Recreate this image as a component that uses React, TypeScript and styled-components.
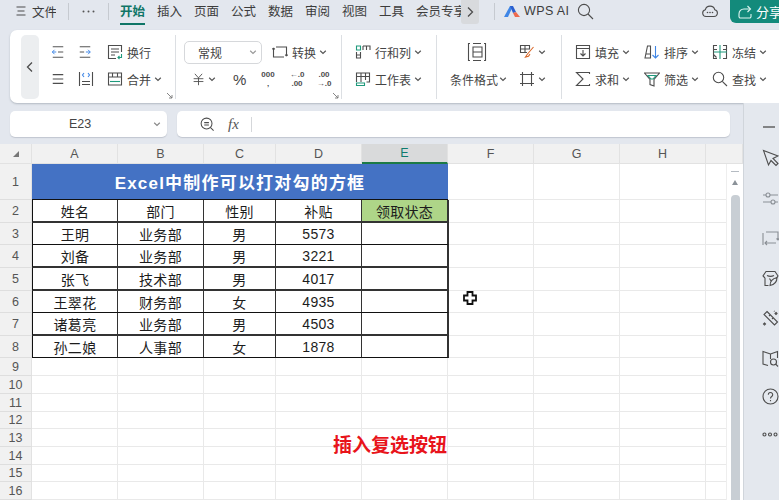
import React from "react";
import styled, { createGlobalStyle } from "styled-components";

const GlobalStyle = createGlobalStyle`
  html, body {
    margin: 0;
    padding: 0;
    background: #e3e7ee;
  }
  * {
    box-sizing: border-box;
  }
`;

const CJK = `"Liberation Sans", "Noto Sans CJK SC", sans-serif`;

const Page = styled.div`
  width: 779px;
  height: 500px;
  overflow: hidden;
  position: relative;
  background: #e3e7ee;
  font-family: ${CJK};
  color: #444;
`;

/* ---------- top bar ---------- */
const TopBar = styled.div`
  height: 28px;
  display: flex;
  align-items: flex-start;
  font-size: 12.5px;
  color: #3c3c3c;
  white-space: nowrap;
`;

const TopItem = styled.div<{ $w: number }>`
  width: ${(p) => p.$w}px;
  height: 22px;
  flex: none;
  display: flex;
  align-items: center;
  overflow: hidden;
`;

const Tab = styled.div<{ $active?: boolean }>`
  width: 37px;
  height: 25px;
  flex: none;
  line-height: 25px;
  position: relative;
  font-weight: ${(p) => (p.$active ? 700 : 400)};
  color: ${(p) => (p.$active ? "#0f7566" : "#3c3c3c")};
  &::after {
    content: "";
    display: ${(p) => (p.$active ? "block" : "none")};
    position: absolute;
    left: 0;
    bottom: 0;
    width: 25px;
    height: 2px;
    background: #0f7566;
  }
`;

const TabsWrap = styled.div`
  margin-left: 11px;
  display: flex;
`;

const Clipped = styled.div`
  width: 45px;
  height: 25px;
  line-height: 25px;
  overflow: hidden;
  flex: none;
`;

const MoreTabs = styled.div`
  width: 18px;
  height: 24px;
  flex: none;
  display: flex;
  align-items: center;
  justify-content: center;
  background: #d8dadd;
  border-radius: 0 0 3px 3px;
`;

const VLine = styled.div<{ $ml: number; $mr: number }>`
  width: 1px;
  height: 17px;
  margin: 3px ${(p) => p.$mr}px 0 ${(p) => p.$ml}px;
  background: #c6cad0;
  flex: none;
`;

const ShareButton = styled.div`
  margin-left: 12px;
  width: 60px;
  height: 23px;
  flex: none;
  display: flex;
  align-items: center;
  gap: 3px;
  padding-left: 7px;
  background: #138a7b;
  color: #fff;
  font-size: 13px;
  border-bottom-left-radius: 6px;
`;

/* ---------- ribbon ---------- */
const Ribbon = styled.div`
  margin: 2px 0 0 10px;
  height: 73px;
  background: #fff;
  border-radius: 7px 0 0 7px;
  display: flex;
  align-items: center;
  padding-left: 11px;
  box-shadow: 0 1px 2px rgba(90, 100, 115, 0.35);
  font-size: 12px;
  white-space: nowrap;
`;

const Collapse = styled.div`
  width: 18px;
  height: 64px;
  flex: none;
  background: #eceef0;
  border-radius: 5px;
  display: flex;
  align-items: center;
  justify-content: center;
`;

const Group = styled.div<{ $w: number; $pl: number; $last?: boolean }>`
  width: ${(p) => p.$w}px;
  height: 64px;
  flex: none;
  padding: 0 0 2px ${(p) => p.$pl}px;
  position: relative;
  display: flex;
  flex-direction: column;
  justify-content: center;
  border-right: ${(p) => (p.$last ? "none" : "1px solid #dcdfe3")};
`;

const ToolRow = styled.div<{ $pl?: number }>`
  height: 27px;
  display: flex;
  align-items: center;
  padding-left: ${(p) => p.$pl ?? 0}px;
`;

const Tool = styled.div<{ $w?: number; $pl?: number }>`
  width: ${(p) => (p.$w ? `${p.$w}px` : "auto")};
  padding-left: ${(p) => p.$pl ?? 0}px;
  flex: none;
  display: flex;
  align-items: center;
  gap: 4px;
`;

const ToolCaret = styled.span`
  display: inline-flex;
  margin-left: -1px;
`;

const Launcher = styled.div`
  position: absolute;
  right: 2px;
  bottom: 0;
  display: flex;
`;

const FormatSelect = styled.div`
  width: 78px;
  height: 23px;
  flex: none;
  margin-right: 10px;
  padding: 0 4px 0 13px;
  border: 1px solid #d6d8db;
  border-radius: 5px;
  display: flex;
  align-items: center;
  justify-content: space-between;
`;

const Percent = styled.span`
  font-size: 15px;
`;

const NumGlyph = styled.div`
  width: 18px;
  display: flex;
  flex-direction: column;
  align-items: center;
  font-size: 8px;
  font-weight: 700;
  color: #4d4d4d;
  span {
    height: 9px;
    line-height: 9px;
  }
`;

/* ---------- work area ---------- */
const Body = styled.div`
  display: flex;
  height: 397px;
`;

const Left = styled.div`
  width: 743px;
  flex: none;
`;

const FormulaRow = styled.div`
  height: 41px;
  padding: 8px 0 7px 10px;
  display: flex;
  gap: 10px;
`;

const NameBox = styled.div`
  width: 157px;
  background: #fff;
  border-radius: 5px;
  display: flex;
  align-items: center;
  justify-content: space-between;
  padding: 0 6px 0 59px;
  font-size: 12.5px;
  color: #444;
  box-shadow: 0 1px 1px rgba(90, 100, 115, 0.25);
`;

const FormulaBar = styled.div`
  width: 553px;
  background: #fff;
  border-radius: 5px;
  display: flex;
  align-items: center;
  padding-left: 23px;
  box-shadow: 0 1px 1px rgba(90, 100, 115, 0.25);
`;

const Fx = styled.span`
  margin-left: 13px;
  font: italic 15px "Liberation Serif", serif;
  color: #555;
`;

const FormulaLine = styled.div`
  width: 1px;
  height: 15px;
  margin-left: 12px;
  background: #d5d7da;
`;

const SheetWrap = styled.div`
  position: relative;
  height: 356px;
  overflow: hidden;
`;

const Sheet = styled.div`
  display: grid;
  grid-template-columns: 32px 86px 86px 72px 86px 86px 86px 86px 86px 37px;
  grid-template-rows: 20px 36px 23px 22px 23px 23px 22px 23px 22px 18px 18px 18px 17px 18px 18px 17px 18px;
  background: #fff;
`;

const ColHead = styled.div<{ $selected?: boolean }>`
  background: ${(p) => (p.$selected ? "#d9dadb" : "#f1f1f1")};
  border-right: 1px solid #e2e2e2;
  border-bottom: ${(p) => (p.$selected ? "2px solid #1d7a45" : "1px solid #e2e2e2")};
  color: ${(p) => (p.$selected ? "#0e7a6e" : "#555")};
  font-size: 12.5px;
  display: flex;
  align-items: center;
  justify-content: center;
`;

const RowHead = styled.div`
  background: #f1f1f1;
  border-right: 1px solid #e2e2e2;
  border-bottom: 1px solid #dedede;
  color: #555;
  font-size: 12.5px;
  display: flex;
  align-items: center;
  justify-content: center;
`;

const Cell = styled.div`
  border-right: 1px solid #e9e9e9;
  border-bottom: 1px solid #e9e9e9;
`;

const TitleCell = styled.div`
  grid-column: span 5;
  background: #4472c4;
  border-bottom: 1px solid #111;
  color: #fff;
  font-size: 17px;
  font-weight: 700;
  letter-spacing: 1.2px;
  display: flex;
  align-items: center;
  justify-content: center;
`;

const DataCell = styled.div<{ $first?: boolean; $thick?: boolean; $head?: boolean }>`
  background: ${(p) => (p.$head ? "#aed588" : "#fff")};
  border-right: 2px solid #333;
  border-left: ${(p) => (p.$first ? "1px solid #111" : "none")};
  border-bottom: ${(p) => (p.$thick ? "2px solid #333" : "1px solid #111")};
  margin-right: -1px;
  position: relative;
  color: #1c1c1c;
  font-size: 14px;
  letter-spacing: 0.3px;
  display: flex;
  align-items: center;
  justify-content: center;
`;

const Note = styled.div`
  position: absolute;
  right: 296px;
  top: 288px;
  color: #e8141b;
  font-size: 19px;
  line-height: 28px;
  font-weight: 700;
`;

const ScrollStrip = styled.div`
  position: absolute;
  top: 20px;
  right: 0;
  bottom: 0;
  width: 17px;
  background: #fff;
  border-left: 1px solid #eee;
`;

const ScrollDash = styled.div`
  position: absolute;
  top: 7px;
  left: 4px;
  width: 8px;
  height: 1px;
  background: #b5bbc2;
`;

const ScrollUp = styled.div`
  position: absolute;
  top: 16px;
  left: 5px;
  border-left: 3px solid transparent;
  border-right: 3px solid transparent;
  border-bottom: 5px solid #8b9299;
`;

const ScrollThumb = styled.div`
  position: absolute;
  top: 31px;
  left: 4px;
  width: 9px;
  height: 330px;
  background: #c8ced4;
  border-radius: 4px 4px 0 0;
`;

const CrossCursor = styled.svg`
  position: absolute;
  left: 463px;
  top: 147px;
  width: 14px;
  height: 14px;
`;

const SidePanel = styled.div`
  flex: 1;
  border-left: 1px solid #d0d5db;
  background: #e4e8ee;
  padding: 13px 0 0 18px;
  display: flex;
  flex-direction: column;
`;

const SideSlot = styled.div<{ $h: number }>`
  height: ${(p) => p.$h}px;
  display: flex;
  align-items: center;
`;

/* ---------- icons ---------- */
const Svg = styled.svg<{ $s: number }>`
  width: ${(p) => p.$s}px;
  height: ${(p) => p.$s}px;
  flex: none;
  fill: none;
  stroke: #4d4d4d;
  stroke-width: 1.1;
`;

const Icon = ({ s = 16, children }: { s?: number; children: React.ReactNode }) => (
  <Svg $s={s} viewBox="0 0 16 16">
    {children}
  </Svg>
);

const BLUE = "#3f86e6";
const GREEN = "#1f9a7c";

const Caret = ({ color = "#555" }: { color?: string }) => (
  <ToolCaret>
    <Svg $s={8} viewBox="0 0 8 8" style={{ stroke: color, strokeWidth: 1.2 }}>
      <path d="M1.2 2.8 4 5.4 6.8 2.8" />
    </Svg>
  </ToolCaret>
);

const Corner = () => (
  <Launcher>
    <Svg $s={7} viewBox="0 0 7 7" style={{ stroke: "#777", strokeWidth: 0.9 }}>
      <path d="M1 1l5 5M6 3v3H3" />
    </Svg>
  </Launcher>
);

const columns = ["A", "B", "C", "D", "E", "F", "G", "H", ""];
const rowHeights = [36, 23, 22, 23, 23, 22, 23, 22, 18, 18, 18, 17, 18, 18, 17, 18];
const people = [
  ["姓名", "部门", "性别", "补贴", "领取状态"],
  ["王明", "业务部", "男", "5573", ""],
  ["刘备", "业务部", "男", "3221", ""],
  ["张飞", "技术部", "男", "4017", ""],
  ["王翠花", "财务部", "女", "4935", ""],
  ["诸葛亮", "业务部", "男", "4503", ""],
  ["孙二娘", "人事部", "女", "1878", ""],
];
const tabs = ["插入", "页面", "公式", "数据", "审阅", "视图", "工具"];

function SheetGrid() {
  return (
    <Sheet>
      <ColHead>
        <svg width="8" height="8" viewBox="0 0 8 8" style={{ marginLeft: 1, marginTop: 1 }}>
          <path d="M7 1v6H1z" fill="#777" />
        </svg>
      </ColHead>
      {columns.map((c, i) => (
        <ColHead key={i} $selected={c === "E"}>
          {c}
        </ColHead>
      ))}
      {rowHeights.map((h, r) => {
        const rowNo = r + 1;
        if (rowNo === 1) {
          return (
            <React.Fragment key={r}>
              <RowHead>1</RowHead>
              <TitleCell>Excel中制作可以打对勾的方框</TitleCell>
              {[0, 1, 2, 3].map((n) => (
                <Cell key={n} />
              ))}
            </React.Fragment>
          );
        }
        const row = people[r - 1];
        return (
          <React.Fragment key={r}>
            <RowHead>{rowNo}</RowHead>
            {columns.slice(0, 5).map((_, c) =>
              row ? (
                <DataCell key={c} $first={c === 0} $thick={h === 23} $head={rowNo === 2 && c === 4}>
                  {row[c]}
                </DataCell>
              ) : (
                <Cell key={c} />
              )
            )}
            {[0, 1, 2, 3].map((n) => (
              <Cell key={n} />
            ))}
          </React.Fragment>
        );
      })}
    </Sheet>
  );
}

function App(): JSX.Element {
  return (
    <Page>
      <GlobalStyle />
      <TopBar>
        <TopItem $w={32} style={{ paddingLeft: 16 }}>
          <Svg $s={10} viewBox="0 0 10 10">
            <path d="M.5 1h9M1.500 5h7M.5 9h9" />
          </Svg>
        </TopItem>
        <TopItem $w={24}>文件</TopItem>
        <VLine $ml={12} $mr={12} />
        <TopItem $w={15}>
          <Svg $s={15} viewBox="0 0 15 15" style={{ stroke: "none", fill: "#555" }}>
            <circle cx="2.500" cy="7.500" r="1" />
            <circle cx="7.500" cy="7.500" r="1" />
            <circle cx="12.500" cy="7.500" r="1" />
          </Svg>
        </TopItem>
        <VLine $ml={12} $mr={0} />
        <TabsWrap>
          <Tab $active>开始</Tab>
          {tabs.map((t) => (
            <Tab key={t}>{t}</Tab>
          ))}
          <Clipped>会员专享</Clipped>
        </TabsWrap>
        <MoreTabs>
          <Svg $s={12} viewBox="0 0 12 12" style={{ strokeWidth: 1.3 }}>
            <path d="M4 1.500 8.500 6 4 10.500" />
          </Svg>
        </MoreTabs>
        <VLine $ml={15} $mr={9} />
        <TopItem $w={20}>
          <svg width="17" height="13" viewBox="0 0 17 13">
            <path d="M0 12 6 1h3L4 12z" fill="#3f86e6" />
            <path d="M6 1h3l3 6-3 1z" fill="#2a5fd0" />
            <path d="M9 8l3-1 4 5h-5z" fill="#ee6a4d" />
          </svg>
        </TopItem>
        <TopItem $w={53} style={{ letterSpacing: 0.4 }}>
          WPS AI
        </TopItem>
        <TopItem $w={125}>
          <Svg $s={17} viewBox="0 0 17 17">
            <circle cx="7" cy="7" r="5.600" />
            <path d="M11 11l5 5" />
          </Svg>
        </TopItem>
        <TopItem $w={16}>
          <Svg $s={16} viewBox="0 0 16 16">
            <path d="M4 13.500h8a3.400 3.400 0 0 0 .8-6.700A4.900 4.900 0 0 0 3.300 6.800 3.400 3.400 0 0 0 4 13.500z" />
            <g style={{ fill: "#4d4d4d", stroke: "none" }}>
              <circle cx="5.500" cy="9.500" r=".8" />
              <circle cx="8" cy="9.500" r=".8" />
              <circle cx="10.500" cy="9.500" r=".8" />
            </g>
          </Svg>
        </TopItem>
        <ShareButton>
          <Svg $s={16} viewBox="0 0 16 16" style={{ stroke: "#dff5f1" }}>
            <path d="M14 10v2.500a1.500 1.500 0 0 1-1.500 1.500h-9A1.500 1.500 0 0 1 2 12.500V10c0-3 2-5 5-5h6" />
            <path d="M10.500 2 13.500 5l-3 3" />
          </Svg>
          分享
        </ShareButton>
      </TopBar>

      <Ribbon>
        <Collapse>
          <Svg $s={12} viewBox="0 0 12 12" style={{ strokeWidth: 1.3 }}>
            <path d="M8 1.500 3.500 6 8 10.500" />
          </Svg>
        </Collapse>

        <Group $w={137} $pl={12}>
          <ToolRow>
            <Tool $w={27}>
              <Icon s={14}>
                <path d="M2 2h12M2 14h12M8 8h6" />
                <path d="M6 8H1.500M4 5.500 1.500 8 4 10.500" stroke={BLUE} />
              </Icon>
            </Tool>
            <Tool $w={29}>
              <Icon s={14}>
                <path d="M2 2h12M2 14h12M2 8h5" />
                <path d="M9 8h5M11.500 5.500 14 8l-2.500 2.500" stroke={BLUE} />
              </Icon>
            </Tool>
            <Tool>
              <Icon>
                <path d="M14.500 8V1.500h-13v13H9" />
                <path d="M4 5h8M4 8h8M4 11h4" />
                <path d="M14.500 10v3.500H11M12.500 12l-1.500 1.500 1.500 1.500" stroke={GREEN} />
              </Icon>
              换行
            </Tool>
          </ToolRow>
          <ToolRow>
            <Tool $w={27}>
              <Icon s={14}>
                <path d="M2 3h12M2 8h12M2 13h12" strokeWidth="1.300" />
              </Icon>
            </Tool>
            <Tool $w={29}>
              <Icon>
                <path d="M1.500 1v14M14.500 1v14M4 13.500h8M4 10.500h8" />
                <path d="M6 2 4.500 4 6 6M10 2l1.500 2L10 6" stroke={BLUE} />
              </Icon>
            </Tool>
            <Tool>
              <Icon>
                <path d="M1.500 2h13v12h-13zM1.500 6h13M5.500 2v4M10.500 2v4" />
                <path d="M3 10.500h10" stroke={GREEN} />
              </Icon>
              合并
              <Caret />
            </Tool>
          </ToolRow>
          <Corner />
        </Group>

        <Group $w={166} $pl={8}>
          <ToolRow>
            <FormatSelect>
              常规
              <Caret color="#999" />
            </FormatSelect>
            <Tool>
              <Icon>
                <path d="M4 3h10.500v9M12 13H1.500V4" />
                <path d="M1.500 4 .3 5.300M1.500 4l1.300 1.300M14.500 12l1.200-1.300M14.500 12l-1.300-1.300" />
              </Icon>
              转换
              <Caret />
            </Tool>
          </ToolRow>
          <ToolRow $pl={8}>
            <Tool $w={41}>
              <Icon s={13}>
                <path d="M3.500 1 8 6l4.500-5M2 7h12M2 10.500h12M8 6v9" />
              </Icon>
              <Caret />
            </Tool>
            <Tool $w={26}>
              <Percent>%</Percent>
            </Tool>
            <Tool $w={29}>
              <NumGlyph>
                <span>000</span>
                <span>,</span>
              </NumGlyph>
            </Tool>
            <Tool $w={27}>
              <NumGlyph>
                <span>←.0</span>
                <span>.00</span>
              </NumGlyph>
            </Tool>
            <Tool>
              <NumGlyph>
                <span>.00</span>
                <span>→.0</span>
              </NumGlyph>
            </Tool>
          </ToolRow>
          <Corner />
        </Group>

        <Group $w={95} $pl={13}>
          <ToolRow>
            <Tool>
              <Icon>
                <path d="M1.500 2h4v4h-4z" stroke={GREEN} />
                <path d="M1.500 8v6h4V8M1.500 11h4M8 2h7v4M11.500 2v4M8 2v4" />
              </Icon>
              行和列
              <Caret />
            </Tool>
          </ToolRow>
          <ToolRow>
            <Tool>
              <Icon>
                <path d="M1.500 11V2h13v9h-3M1.500 5.500h13M6 2v9M10.500 2v7" />
                <path d="M1.500 12h8v2.500h-8z" stroke={GREEN} />
              </Icon>
              工作表
              <Caret />
            </Tool>
          </ToolRow>
        </Group>

        <Group $w={125} $pl={13}>
          <ToolRow>
            <Tool $w={69} $pl={17}>
              <Svg $s={20} viewBox="0 0 20 20">
                <path d="M3 1.500H1.500v17H3M17 1.500h1.500v17H17M6 1.500h8M6 18.500h8" />
                <path d="M6 5h9v5H6zM6 10v5h9v-5" />
              </Svg>
            </Tool>
            <Tool>
              <Icon>
                <path d="M8 8.500H1.500V1.500h9v4M1.500 5h9M6 1.500v7" />
                <path d="M14.500 3 8.500 10M8.500 10l-2 3 3-.8 1.500-2" stroke="#d9682a" />
              </Icon>
              <Caret />
            </Tool>
          </ToolRow>
          <ToolRow>
            <Tool $w={69} style={{ gap: 2 }}>
              条件格式
              <Caret />
            </Tool>
            <Tool>
              <Icon>
                <path d="M1 3.500h14M1 12.500h14M3.500 1v14M12.500 1v14" />
              </Icon>
              <Caret />
            </Tool>
          </ToolRow>
        </Group>

        <Group $w={217} $pl={13} $last>
          <ToolRow>
            <Tool $w={69}>
              <Icon>
                <path d="M1.500 1.500h13v13h-13zM1.500 4.500h13" />
                <path d="M8 6v6M5.500 9.500 8 12l2.500-2.500" />
              </Icon>
              填充
              <Caret />
            </Tool>
            <Tool $w={68}>
              <Icon>
                <path d="M1 14 3.500 2h3v12H1zM2 10h4.500" />
                <path d="M11.500 2v12M8.500 11l3 3 3-3" stroke={BLUE} />
              </Icon>
              排序
              <Caret />
            </Tool>
            <Tool>
              <Icon>
                <path d="M5 1.500H1.500v13H5M11 1.500h3.500v13H11M1.500 5.500H5M1.500 10.500l3 3M11 5.500h3.500" />
                <path d="M8 1v14M2 8h13" stroke={GREEN} />
              </Icon>
              冻结
              <Caret />
            </Tool>
          </ToolRow>
          <ToolRow>
            <Tool $w={69}>
              <Icon>
                <path d="M14.500 3V1.500h-13L8 8l-6.500 6.500h13V13" />
              </Icon>
              求和
              <Caret />
            </Tool>
            <Tool $w={68}>
              <Icon>
                <path d="M.5 2h15L10 8.500V15l-4-1.500v-5z" />
                <path d="M4 4.500h8L9 8H7z" stroke={GREEN} />
              </Icon>
              筛选
              <Caret />
            </Tool>
            <Tool>
              <Icon>
                <circle cx="6.500" cy="6.500" r="5.200" />
                <path d="M10.300 10.300 15 15" />
              </Icon>
              查找
              <Caret />
            </Tool>
          </ToolRow>
        </Group>
      </Ribbon>

      <Body>
        <Left>
          <FormulaRow>
            <NameBox>
              E23
              <Caret color="#888" />
            </NameBox>
            <FormulaBar>
              <Icon s={15}>
                <circle cx="7" cy="7" r="5.800" />
                <path d="M4.500 6h5M4.500 8.500h5M11 11l3.500 3.500" />
              </Icon>
              <Fx>fx</Fx>
              <FormulaLine />
            </FormulaBar>
          </FormulaRow>
          <SheetWrap>
            <SheetGrid />
            <Note>插入复选按钮</Note>
            <ScrollStrip>
              <ScrollDash />
              <ScrollUp />
              <ScrollThumb />
            </ScrollStrip>
            <CrossCursor viewBox="0 0 14 14">
              <path d="M4.500 1h5v3.500H13v5H9.500V13h-5V9.500H1v-5h3.500z" fill="#fff" stroke="#111" strokeWidth="1.800" />
            </CrossCursor>
          </SheetWrap>
        </Left>
        <SidePanel>
          <SideSlot $h={22}>
            <Svg $s={14} viewBox="0 0 14 14">
              <path d="M1 7h12" strokeWidth="1.300" />
            </Svg>
          </SideSlot>
          <SideSlot $h={40}>
            <Svg $s={18} viewBox="0 0 18 18">
              <path d="M1.500 1.500 16 7l-5 2.500 5 5-2 2-5-5L6.500 16z" />
            </Svg>
          </SideSlot>
          <SideSlot $h={40}>
            <Svg $s={17} viewBox="0 0 17 17" style={{ stroke: "#8a8f95" }}>
              <path d="M1 5h3M8 5h8M1 12h8M13 12h3" />
              <circle cx="6" cy="5" r="2" />
              <circle cx="11" cy="12" r="2" />
            </Svg>
          </SideSlot>
          <SideSlot $h={40}>
            <Svg $s={17} viewBox="0 0 17 17" style={{ stroke: "#8a8f95" }}>
              <path d="M1 3v12M4 2h12v8M14.500 8.500 16 10l1.500-1.500M3 13h11M5 11l-2 2 2 2" />
            </Svg>
          </SideSlot>
          <SideSlot $h={40}>
            <Svg $s={17} viewBox="0 0 17 17">
              <path d="M3 8 1 6l3-4.500h9L16 6l-1.500 2M3 8v7.500h3.500M5 5.500c2 1 5 1 7 0" />
              <path d="M8 15.500c0-4 3-7 7-8 0 4-2 7-7 8zM9 11l-1.500-2.500" />
            </Svg>
          </SideSlot>
          <SideSlot $h={40}>
            <Svg $s={17} viewBox="0 0 17 17">
              <path d="M5 1.500 15.500 12l-3 3L2 4.500zM7 6l1.500-1.500M10 9l1.500-1.500" />
              <path d="M14 2.500l1 1-1 1-1-1zM2.500 13l1 1-1 1-1-1zM12 1l.5.5" />
            </Svg>
          </SideSlot>
          <SideSlot $h={40}>
            <Svg $s={17} viewBox="0 0 17 17">
              <path d="M8.500 4 1 1.500V14l5 1.500M8.500 4 15.500 1.500V8M8.500 4v5" />
              <circle cx="11.500" cy="12" r="3" />
              <path d="M13.700 14.200 16 16.500" />
            </Svg>
          </SideSlot>
          <SideSlot $h={36}>
            <Svg $s={17} viewBox="0 0 17 17">
              <circle cx="8.500" cy="8.500" r="7.500" />
              <path d="M6.300 6.700a2.200 2.200 0 1 1 3.400 1.800c-.8.500-1.200 1-1.200 2M8.500 12v1.200" />
            </Svg>
          </SideSlot>
          <SideSlot $h={40}>
            <Svg $s={17} viewBox="0 0 17 17">
              <circle cx="2.500" cy="8.500" r="1.500" />
              <circle cx="8" cy="8.500" r="1.500" />
              <circle cx="13.500" cy="8.500" r="1.500" />
            </Svg>
          </SideSlot>
        </SidePanel>
      </Body>
    </Page>
  );
}

export default App;
